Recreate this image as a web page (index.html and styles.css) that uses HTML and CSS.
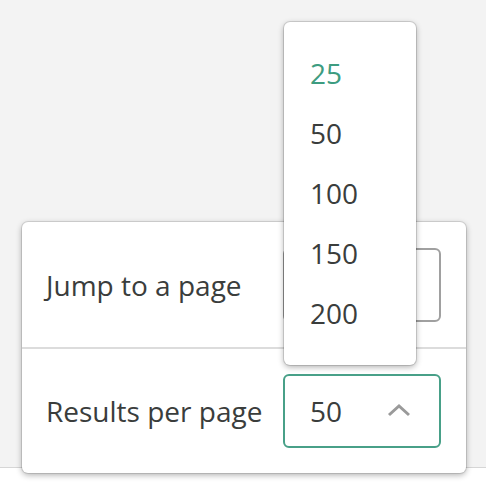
FILE: index.html
```html
<!DOCTYPE html>
<html>
<head>
<meta charset="utf-8">
<link rel="stylesheet" href="styles.css">
</head>
<body>
<div class="backdrop"></div>
<div class="card">
  <div class="row">
    <span class="label">Jump to a page</span>
    <div class="field"></div>
  </div>
  <div class="row">
    <span class="label">Results per page</span>
    <div class="field select">
      <span class="value">50</span>
      <svg class="chev" width="24" height="14" viewBox="0 0 24 14"><path d="M2 12 L12 3 L22 12" fill="none" stroke="#9a9a9a" stroke-width="3"/></svg>
    </div>
  </div>
</div>
<ul class="menu">
  <li class="item active">25</li>
  <li class="item">50</li>
  <li class="item">100</li>
  <li class="item">150</li>
  <li class="item">200</li>
</ul>
</body>
</html>
```
FILE: styles.css
```css
html, body {
  margin: 0;
  padding: 0;
  background: #ffffff;
  font-family: "Open Sans", sans-serif;
  color: #3a3d3c;
}
.backdrop {
  height: 467px;
  background: #f3f3f3;
  border-bottom: 1px solid #d6d6d6;
}
.card {
  position: absolute;
  left: 22px;
  top: 222px;
  width: 444px;
  background: #fff;
  border-radius: 6px;
  box-shadow: 0 0 0 1px rgba(0,0,0,0.1), 0 2px 6px rgba(0,0,0,0.32);
}
.row {
  display: flex;
  align-items: center;
  justify-content: space-between;
  height: 125px;
  padding: 0 25px 0 24px;
  box-sizing: border-box;
}
.row + .row {
  border-top: 2px solid #dcdcdc;
  height: 126px;
}
.label {
  font-size: 28px;
}
.field {
  width: 158px;
  height: 74px;
  box-sizing: border-box;
  border: 2px solid #a0a0a0;
  border-radius: 6px;
}
.select {
  border-color: #48a088;
  display: flex;
  align-items: center;
  justify-content: space-between;
  padding: 0 28px 0 25px;
}
.value {
  font-size: 28px;
}
.chev {
  display: block;
  margin-top: -2px;
}
.menu {
  position: absolute;
  left: 284px;
  top: 22px;
  width: 132px;
  margin: 0;
  padding: 21px 0 22px;
  list-style: none;
  background: #fff;
  border-radius: 6px;
  box-shadow: 0 0 0 1px rgba(0,0,0,0.12), 0 2px 6px rgba(0,0,0,0.32);
}
.item {
  height: 60px;
  line-height: 60px;
  padding-left: 26px;
  font-size: 28px;
}
.item.active {
  color: #3d9c80;
}
```
